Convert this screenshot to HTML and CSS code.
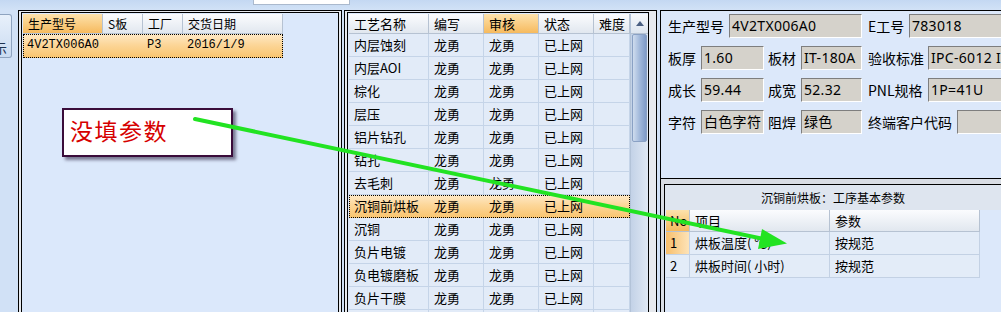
FILE: index.html
```html
<!DOCTYPE html>
<html lang="zh-CN">
<head>
<meta charset="utf-8">
<title>工艺参数</title>
<link rel="stylesheet" href="styles.css">
</head>
<body>
<div class="screen">
  <div class="topbar"><div class="topbox"></div></div>
  <div class="workspace">
    <div class="sidestrip"><div class="sidebtn"><span>示</span></div></div>

    <section class="frame frame-left">
      <div class="frame-inner">
        <div class="ogrid">
          <div class="orow ohead">
            <div class="c sort">生产型号</div><div class="c">S板</div><div class="c">工厂</div><div class="c">交货日期</div>
          </div>
          <div class="orow sel">
            <div class="c">4V2TX006A0</div><div class="c"></div><div class="c">P3</div><div class="c">2016/1/9</div>
          </div>
        </div>
      </div>
    </section>

    <section class="frame frame-mid">
      <div class="frame-inner mid-inner">
        <div class="pgrid">
          <div class="prow phead"><div class="c">工艺名称</div><div class="c">编写</div><div class="c sort">审核</div><div class="c">状态</div><div class="c">难度</div></div>
          <div class="prow"><div class="c">内层蚀刻</div><div class="c">龙勇</div><div class="c">龙勇</div><div class="c">已上网</div><div class="c"></div></div>
          <div class="prow"><div class="c">内层AOI</div><div class="c">龙勇</div><div class="c">龙勇</div><div class="c">已上网</div><div class="c"></div></div>
          <div class="prow"><div class="c">棕化</div><div class="c">龙勇</div><div class="c">龙勇</div><div class="c">已上网</div><div class="c"></div></div>
          <div class="prow"><div class="c">层压</div><div class="c">龙勇</div><div class="c">龙勇</div><div class="c">已上网</div><div class="c"></div></div>
          <div class="prow"><div class="c">铝片钻孔</div><div class="c">龙勇</div><div class="c">龙勇</div><div class="c">已上网</div><div class="c"></div></div>
          <div class="prow"><div class="c">钻孔</div><div class="c">龙勇</div><div class="c">龙勇</div><div class="c">已上网</div><div class="c"></div></div>
          <div class="prow"><div class="c">去毛刺</div><div class="c">龙勇</div><div class="c">龙勇</div><div class="c">已上网</div><div class="c"></div></div>
          <div class="prow sel"><div class="c">沉铜前烘板</div><div class="c">龙勇</div><div class="c">龙勇</div><div class="c">已上网</div><div class="c"></div></div>
          <div class="prow"><div class="c">沉铜</div><div class="c">龙勇</div><div class="c">龙勇</div><div class="c">已上网</div><div class="c"></div></div>
          <div class="prow"><div class="c">负片电镀</div><div class="c">龙勇</div><div class="c">龙勇</div><div class="c">已上网</div><div class="c"></div></div>
          <div class="prow"><div class="c">负电镀磨板</div><div class="c">龙勇</div><div class="c">龙勇</div><div class="c">已上网</div><div class="c"></div></div>
          <div class="prow"><div class="c">负片干膜</div><div class="c">龙勇</div><div class="c">龙勇</div><div class="c">已上网</div><div class="c"></div></div>
          <div class="prow"><div class="c"></div><div class="c"></div><div class="c"></div><div class="c"></div><div class="c"></div></div>
        </div>
        <div class="vscroll">
          <div class="sbtn"><svg width="8" height="5" viewBox="0 0 8 5"><polygon points="0,5 4,0 8,5" fill="#4a5f82"/></svg></div>
          <div class="sthumb"></div>
          <div class="strack"></div>
        </div>
      </div>
    </section>

    <section class="panel-right">
      <div class="form">
        <div class="frow">
          <div class="lbl w61">生产型号</div><div class="inp w133">4V2TX006A0</div>
          <div class="lbl w47 pl6">E工号</div><div class="inp wrest">783018</div>
        </div>
        <div class="frow">
          <div class="lbl w33">板厚</div><div class="inp w63">1.60</div>
          <div class="lbl w37 pl4">板材</div><div class="inp w61">IT-180A</div>
          <div class="lbl w66 pl6">验收标准</div><div class="inp wrest">IPC-6012 II</div>
        </div>
        <div class="frow">
          <div class="lbl w33">成长</div><div class="inp w63">59.44</div>
          <div class="lbl w37 pl4">成宽</div><div class="inp w61">52.32</div>
          <div class="lbl w66 pl6">PNL规格</div><div class="inp wrest">1P=41U</div>
        </div>
        <div class="frow">
          <div class="lbl w33">字符</div><div class="inp w63">白色字符</div>
          <div class="lbl w37 pl4">阻焊</div><div class="inp w61">绿色</div>
          <div class="lbl w95 pl6">终端客户代码</div><div class="inp wrest"></div>
        </div>
      </div>
      <div class="group">
        <div class="gtitle">沉铜前烘板：工序基本参数</div>
        <div class="bgrid">
          <div class="brow bhead"><div class="c sort">No</div><div class="c">项目</div><div class="c">参数</div></div>
          <div class="brow"><div class="c cur">1</div><div class="c">烘板温度( ℃)</div><div class="c">按规范</div></div>
          <div class="brow"><div class="c">2</div><div class="c">烘板时间( 小时)</div><div class="c">按规范</div></div>
        </div>
      </div>
    </section>
  </div>

  <div class="note">没填参数</div>
  <svg class="arrow" width="1001" height="312" viewBox="0 0 1001 312">
    <line x1="195" y1="119" x2="764" y2="239" stroke="#22e322" stroke-width="4" stroke-linecap="round"/>
    <polygon points="787,243.5 762,229 758,249" fill="#22e322"/>
  </svg>
</div>
</body>
</html>
```

FILE: styles.css
```css
* { box-sizing: border-box; }

html, body {
  margin: 0;
  padding: 0;
}

body {
  width: 1001px;
  height: 312px;
  overflow: hidden;
  background: #d1e1f6;
  font-family: "Noto Sans CJK SC", "Noto Sans", sans-serif;
  color: #000;
}

.screen {
  position: relative;
  width: 1001px;
  height: 312px;
  overflow: hidden;
}

/* top strip */
.topbar {
  height: 9px;
  padding-left: 253px;
  background: linear-gradient(#c4d8f2, #d0e1f6);
}

.topbox {
  width: 97px;
  height: 5px;
  background: #fff;
  border: 1px solid #aab9cd;
  border-top: none;
}

.workspace {
  display: flex;
  align-items: flex-start;
  height: 303px;
}

/* left strip with cut-off button */
.sidestrip {
  flex: none;
  width: 18px;
  padding-top: 5px;
}

.sidebtn {
  width: 12px;
  height: 44px;
  border: 1px solid #8ea3bf;
  border-left: none;
  border-radius: 0 3px 3px 0;
  background: linear-gradient(#e8f0fb, #cadbf1);
  overflow: hidden;
  display: flex;
  justify-content: flex-end;
  align-items: flex-end;
  padding: 0 4px 2px 0;
  font-size: 13px;
  line-height: 14px;
  color: #1d3250;
}

.sidebtn span { flex: none; }

/* generic double-line frame */
.frame {
  flex: none;
  margin-top: 1px;
  height: 320px;
  border: 1px solid #000;
  background: #e6e9ee;
  padding: 1px 2px 0 2px;
}

.frame-inner {
  height: 100%;
  border: 1px solid #000;
  background: #dbe8fb;
  padding: 1px 0 0 1px;
}

.frame-left { width: 324px; }

.frame-mid {
  width: 313px;
  margin-left: 2px;
  padding-right: 7px;
}

.mid-inner {
  display: flex;
  align-items: flex-start;
}

/* shared cell look */
.c {
  white-space: nowrap;
  overflow: hidden;
}

/* orders grid (left) */
.ogrid { width: 260px; }

.orow {
  display: grid;
  grid-template-columns: 80px 40px 40px 100px;
}

.ohead { height: 20px; }

.ohead .c {
  background: linear-gradient(#fbfcfe, #e1e7ef);
  border-right: 1px solid #b6c2d2;
  border-bottom: 1px solid #b6c2d2;
  padding-left: 5px;
  font-size: 12px;
  line-height: 19px;
}

.ohead .c.sort,
.phead .c.sort,
.bhead .c.sort {
  background: linear-gradient(#fde2ac, #f6ba5e);
}

.orow.sel {
  height: 24px;
  background: linear-gradient(#fee9c7 0%, #fcd698 45%, #f9c46e 100%);
  outline: 1px dotted #000;
  outline-offset: -1px;
}

.orow.sel .c {
  font-family: "Liberation Mono", "Noto Sans CJK SC", monospace;
  font-size: 12px;
  line-height: 23px;
  padding-left: 4px;
}

/* process grid (middle) */
.pgrid { width: 281px; flex: none; }

.prow {
  display: grid;
  grid-template-columns: 80px 55px 55px 55px 36px;
  height: 23px;
}

.prow .c {
  background: #e2ebf8;
  border-right: 1px solid #c5d4e8;
  border-bottom: 1px solid #c5d4e8;
  padding-left: 5px;
  font-size: 13px;
  line-height: 22px;
}

.phead { height: 20px; }

.phead .c {
  background: linear-gradient(#fbfcfe, #e1e7ef);
  border-right-color: #b6c2d2;
  border-bottom-color: #b6c2d2;
  line-height: 19px;
}

.prow.sel {
  background: linear-gradient(#fee9c7 0%, #fcd698 45%, #f9c46e 100%);
  outline: 1px dotted #000;
  outline-offset: -1px;
}

.prow.sel .c {
  background: transparent;
  border-right-color: transparent;
  border-bottom-color: transparent;
}

/* scrollbar */
.vscroll {
  flex: none;
  width: 18px;
  height: 300px;
  display: flex;
  flex-direction: column;
  background: linear-gradient(to right, #c3d2e7, #dfe8f4);
  border-left: 1px solid #b3c3d8;
}

.sbtn {
  height: 20px;
  flex: none;
  background: linear-gradient(#f7f9fc, #dde5ef);
  border-bottom: 1px solid #b6c2d2;
  display: flex;
  align-items: center;
  justify-content: center;
}

.sthumb {
  flex: none;
  height: 108px;
  margin: 0 1px;
  border: 1px solid #8aa1c4;
  border-radius: 2px;
  background: linear-gradient(to right, #cfdcee, #a2b9db 50%, #7f9bc8);
}

.strack { flex: 1; }

/* right side */
.panel-right {
  flex: none;
  width: 341px;
  margin-left: 3px;
  margin-top: 1px;
  height: 310px;
  border-left: 1px solid #000;
  background: #d9dde4;
  overflow: hidden;
}

.form {
  height: 169px;
  border-top: 1px solid #000;
  border-bottom: 1px solid #000;
  background: #dce8fa;
  padding: 3px 0 0 7px;
  display: flex;
  flex-direction: column;
  gap: 8px;
}

.frow {
  display: flex;
  align-items: center;
  height: 24px;
}

.lbl {
  flex: none;
  font-size: 14px;
  white-space: nowrap;
}

.inp {
  flex: none;
  height: 24px;
  background: #d5d2cb;
  border: 1px solid;
  border-color: #7e7e7e #fff #fff #7e7e7e;
  font-family: "Noto Sans", "Noto Sans CJK SC", sans-serif;
  font-size: 14px;
  line-height: 22px;
  padding-left: 2px;
  letter-spacing: 0.3px;
  white-space: nowrap;
  overflow: hidden;
}

.w33 { width: 33px; }
.w37 { width: 37px; }
.w47 { width: 47px; }
.w61 { width: 61px; }
.w63 { width: 63px; }
.w66 { width: 66px; }
.w95 { width: 95px; }
.w133 { width: 133px; }
.wrest { width: 120px; }
.pl4 { padding-left: 4px; }
.pl6 { padding-left: 6px; }

.group {
  margin: 5px 0 0 3px;
  height: 140px;
  border-top: 1px solid #000;
  border-left: 1px solid #000;
  background: #dce8fa;
}

.gtitle {
  height: 25px;
  background: #dee5ef;
  text-align: center;
  font-size: 12px;
  line-height: 25px;
}

.bgrid {
  width: 315px;
  margin-left: 1px;
}

.brow {
  display: grid;
  grid-template-columns: 24px 140px 150px;
  height: 23px;
}

.brow .c {
  background: #e3ecf8;
  border-right: 1px solid #c3d1e4;
  border-bottom: 1px solid #c3d1e4;
  padding-left: 5px;
  font-size: 13px;
  line-height: 22px;
}

.brow .c:first-child { padding-left: 4px; }

.bhead { height: 22px; }

.bhead .c {
  background: linear-gradient(#fbfcfe, #e1e7ef);
  border-right-color: #b6c2d2;
  border-bottom-color: #b6c2d2;
  line-height: 21px;
}

.brow .c.cur {
  background: linear-gradient(to right, #f8bf6c, #fde3b8);
}

/* overlay annotation */
.note {
  position: absolute;
  left: 62px;
  top: 108px;
  width: 171px;
  height: 49px;
  border: 2px solid #3a0c3a;
  background: #fff;
  box-shadow: 3px 3px 3px rgba(40, 30, 60, 0.55);
  color: #d60000;
  font-size: 23px;
  line-height: 40px;
  padding-left: 6px;
  letter-spacing: 1.5px;
}

.arrow {
  position: absolute;
  left: 0;
  top: 0;
  pointer-events: none;
}
```
